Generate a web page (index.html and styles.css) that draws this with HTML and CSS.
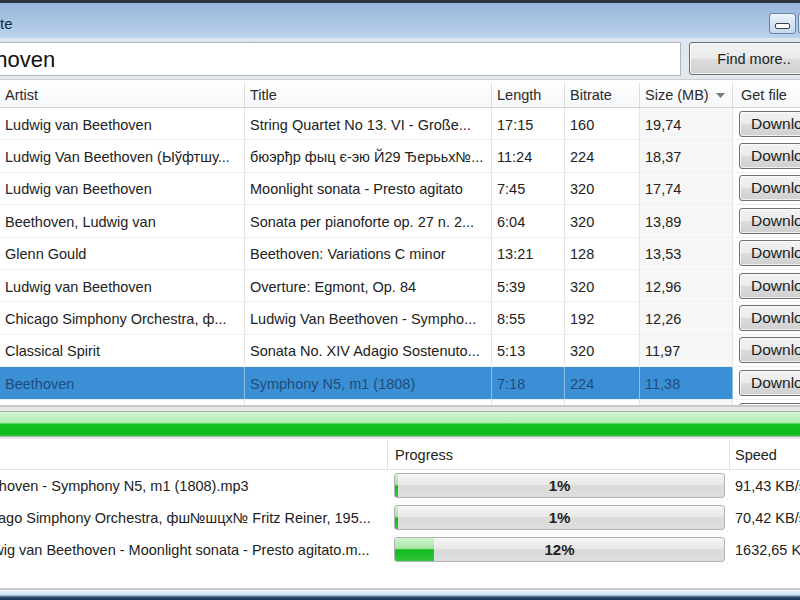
FILE: index.html
```html
<!DOCTYPE html>
<html>
<head>
<meta charset="utf-8">
<link rel="stylesheet" href="styles.css">
</head>
<body>
<div class="window">
  <div class="frame-top"></div>
  <div class="titlebar">
    <span class="title">te</span>
    <div class="winbtns">
      <div class="capbtn min"><span class="dash"></span></div>
      <div class="capbtn max"></div>
    </div>
  </div>
  <div class="searchrow">
    <div class="search">Beethoven</div>
    <div class="btn find">Find more..</div>
  </div>
  <div class="results">
    <div class="row head">
      <div class="cell">Artist</div>
      <div class="cell">Title</div>
      <div class="cell">Length</div>
      <div class="cell">Bitrate</div>
      <div class="cell">Size (MB)<svg class="sortarrow" width="9" height="5" viewBox="0 0 9 5"><path d="M0 0h9L4.5 5z" fill="#7b7b7b"/></svg></div>
      <div class="cell getfile">Get file</div>
    </div>
    <div class="row"><div class="cell">Ludwig van Beethoven</div><div class="cell">String Quartet No 13. VI - Große...</div><div class="cell">17:15</div><div class="cell">160</div><div class="cell sorted">19,74</div><div class="cell getfile"><div class="btn dl">Download</div></div></div>
    <div class="row"><div class="cell">Ludwig Van Beethoven (Ыўфтшу...</div><div class="cell">бюэрђр фыц є-эю Й29 Ђерььх№...</div><div class="cell">11:24</div><div class="cell">224</div><div class="cell sorted">18,37</div><div class="cell getfile"><div class="btn dl">Download</div></div></div>
    <div class="row"><div class="cell">Ludwig van Beethoven</div><div class="cell">Moonlight sonata - Presto agitato</div><div class="cell">7:45</div><div class="cell">320</div><div class="cell sorted">17,74</div><div class="cell getfile"><div class="btn dl">Download</div></div></div>
    <div class="row"><div class="cell">Beethoven, Ludwig van</div><div class="cell">Sonata per pianoforte op. 27 n. 2...</div><div class="cell">6:04</div><div class="cell">320</div><div class="cell sorted">13,89</div><div class="cell getfile"><div class="btn dl">Download</div></div></div>
    <div class="row"><div class="cell">Glenn Gould</div><div class="cell">Beethoven: Variations C minor</div><div class="cell">13:21</div><div class="cell">128</div><div class="cell sorted">13,53</div><div class="cell getfile"><div class="btn dl">Download</div></div></div>
    <div class="row"><div class="cell">Ludwig van Beethoven</div><div class="cell">Overture: Egmont, Op. 84</div><div class="cell">5:39</div><div class="cell">320</div><div class="cell sorted">12,96</div><div class="cell getfile"><div class="btn dl">Download</div></div></div>
    <div class="row"><div class="cell">Chicago Simphony Orchestra, ф...</div><div class="cell">Ludwig Van Beethoven - Sympho...</div><div class="cell">8:55</div><div class="cell">192</div><div class="cell sorted">12,26</div><div class="cell getfile"><div class="btn dl">Download</div></div></div>
    <div class="row"><div class="cell">Classical Spirit</div><div class="cell">Sonata No. XIV Adagio Sostenuto...</div><div class="cell">5:13</div><div class="cell">320</div><div class="cell sorted">11,97</div><div class="cell getfile"><div class="btn dl">Download</div></div></div>
    <div class="row sel"><div class="cell">Beethoven</div><div class="cell">Symphony N5, m1 (1808)</div><div class="cell">7:18</div><div class="cell">224</div><div class="cell sorted">11,38</div><div class="cell getfile"><div class="btn dl">Download</div></div></div>
    <div class="row partial"><div class="cell"></div><div class="cell"></div><div class="cell"></div><div class="cell"></div><div class="cell sorted"></div><div class="cell getfile"><div class="btn dl">Download</div></div></div>
  </div>
  <div class="totalbar"><div class="bar"></div></div>
  <div class="downloads">
    <div class="drow head">
      <div class="dcell file">File</div>
      <div class="dcell prog">Progress</div>
      <div class="dcell speed">Speed</div>
    </div>
    <div class="drow">
      <div class="dcell file">Beethoven - Symphony N5, m1 (1808).mp3</div>
      <div class="dcell prog"><div class="pbar"><div class="pfill" style="width:1%"></div><span class="plabel">1%</span></div></div>
      <div class="dcell speed">91,43 KB/s</div>
    </div>
    <div class="drow">
      <div class="dcell file">Chicago Simphony Orchestra, фш№шцх№ Fritz Reiner, 195...</div>
      <div class="dcell prog"><div class="pbar"><div class="pfill" style="width:1%"></div><span class="plabel">1%</span></div></div>
      <div class="dcell speed">70,42 KB/s</div>
    </div>
    <div class="drow">
      <div class="dcell file">Ludwig van Beethoven - Moonlight sonata - Presto agitato.m...</div>
      <div class="dcell prog"><div class="pbar"><div class="pfill" style="width:12%"></div><span class="plabel">12%</span></div></div>
      <div class="dcell speed">1632,65 KB/s</div>
    </div>
  </div>
  <div class="frame-bottom"></div>
</div>
</body>
</html>
```

FILE: styles.css
```css
* { box-sizing: border-box; }
html, body { margin: 0; padding: 0; }
body {
  width: 800px;
  height: 600px;
  overflow: hidden;
  background: #ffffff;
  font-family: "Liberation Sans", Arial, sans-serif;
  font-size: 14.5px;
  color: #222222;
}
.window {
  display: flex;
  flex-direction: column;
  width: 800px;
  height: 600px;
  overflow: hidden;
}
.frame-top { flex: none; height: 3px; background: #2c323b; }
.titlebar {
  flex: none;
  height: 35px;
  display: flex;
  justify-content: space-between;
  align-items: flex-start;
  background: linear-gradient(#96b5d8, #a9c5e3 55%, #bcd3eb);
}
.title { font-size: 15px; color: #1b2a3b; margin-top: 12px; }
.winbtns { display: flex; gap: 2px; margin-top: 10px; margin-right: -26px; }
.capbtn {
  width: 27px;
  height: 21px;
  border: 1px solid #6b84a4;
  border-radius: 3px;
  background: linear-gradient(#eef4fb, #d6e4f3 50%, #c3d7ee);
  display: flex;
  align-items: center;
  justify-content: center;
}
.capbtn.max { width: 28px; }
.dash {
  width: 15px;
  height: 6px;
  margin-top: 4px;
  border: 1px solid #3a3f46;
  border-radius: 2px;
  background: #ffffff;
}
.searchrow {
  flex: none;
  height: 42px;
  display: flex;
  gap: 8px;
  padding: 4px 0 4px 0;
  background: linear-gradient(#dde6ef, #e4e8ec);
  border-bottom: 1px solid #c9ced3;
}
.search {
  flex: 1;
  margin-left: -55px;
  height: 34px;
  padding-left: 4px;
  border: 1px solid #aeb6c0;
  background: #ffffff;
  font-size: 22px;
  line-height: 33px;
  color: #111;
  white-space: nowrap;
  overflow: hidden;
}
.btn {
  border: 1px solid #707070;
  border-radius: 3px;
  background: linear-gradient(#f3f3f3, #ebebeb 48%, #dcdcdc 52%, #cfcfcf);
  box-shadow: inset 0 0 0 1px rgba(255,255,255,0.7);
  display: flex;
  align-items: center;
  justify-content: center;
  white-space: nowrap;
  color: #222;
}
.find { flex: none; width: 130px; height: 33px; margin-right: -19px; font-size: 14.5px; }
.results { flex: none; background: #ffffff; }
.row {
  display: grid;
  grid-template-columns: 245px 247px 73px 75px 93px 96px;
  height: 32.4px;
  border-bottom: 1px solid #efefef;
}
.row.head {
  height: 28px;
  padding-top: 3px;
  background: linear-gradient(#ffffff, #f6f7f9);
  border-bottom: 1px solid #d5d5d5;
}
.cell {
  display: flex;
  align-items: center;
  padding-left: 5px;
  border-right: 1px solid #e4e4e4;
  white-space: nowrap;
  overflow: hidden;
}
.row:not(.head) .cell { padding-top: 2px; }
.head .cell { border-right-color: #dcdcdc; color: #2a2a2a; }
.head .getfile { padding-left: 8px; }
.sortarrow { margin-left: 7px; flex: none; }
.sorted { background: #f7f7f7; }
.head .sorted { background: transparent; }
.getfile { border-right: none; padding-left: 6px; }
.row:not(.head) .getfile { padding-top: 0; }
.dl { width: 92px; height: 26px; font-size: 15.5px; justify-content: flex-start; padding-left: 11px; }
.sel .cell { background: #3b8fd5; color: #1f4d7a; border-right-color: #8ec1ea; }
.sel .getfile { background: #ffffff; }
.row.partial { height: 7px; border-bottom: 2px solid #c8c8c8; }
.partial .cell { align-items: flex-start; }
.partial .dl { margin-top: 3px; }
.totalbar {
  flex: none;
  height: 32px;
  padding: 4px 0 2px 0;
  background: #e7e7e7;
}
.bar {
  height: 26px;
  border-top: 1px solid #9fb79f;
  border-bottom: 1px solid #a8a8a8;
  background: linear-gradient(#d3f5d3, #b3ecb3 45%, #15c222 50%, #0fb81d 90%, #38c842);
}
.downloads {
  flex: 1;
  background: #ffffff;
  margin-left: -38px;
}
.drow {
  display: grid;
  grid-template-columns: 426px 342px 120px;
  height: 32px;
}
.drow.head { height: 31px; padding-top: 2px; border-bottom: 1px solid #e2e2e2; }
.dcell {
  display: flex;
  align-items: center;
  white-space: nowrap;
  overflow: hidden;
}
.head .dcell { border-right: 1px solid #e0e0e0; }
.file { padding-left: 7px; }
.prog { padding-left: 6px; }
.head .prog { padding-left: 7px; }
.speed { padding-left: 5px; }
.pbar {
  position: relative;
  width: 331px;
  height: 25px;
  border: 1px solid #b3b3b3;
  border-radius: 3px;
  background: linear-gradient(#f5f5f5, #e9e9e9 45%, #d9d9d9 52%, #dedede);
  overflow: hidden;
  display: flex;
  align-items: center;
  justify-content: center;
}
.pfill {
  position: absolute;
  left: 0;
  top: 0;
  bottom: 0;
  background: linear-gradient(#cff3cf, #a6e7a6 45%, #13bb20 52%, #2fc63b);
}
.plabel { position: relative; font-weight: bold; font-size: 15px; color: #222; }
.frame-bottom {
  flex: none;
  height: 12px;
  border-top: 2px solid #cacaca;
  background: linear-gradient(#f4f8fc 0, #c9ddf0 50%, #2f4f72 70%, #1a3350);
}
```
